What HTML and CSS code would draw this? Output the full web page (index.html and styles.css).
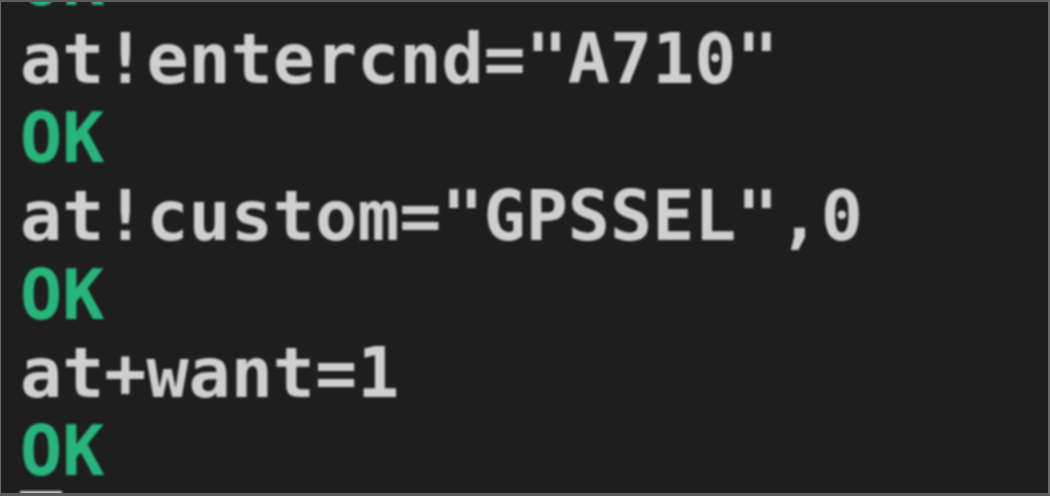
FILE: index.html
```html
<!DOCTYPE html>
<html lang="en">
<head>
<meta charset="utf-8">
<title>Terminal</title>
<link rel="stylesheet" href="styles.css">
</head>
<body>
<div class="frame">
  <div class="term">
    <div class="line ok">OK</div>
    <div class="line">at!entercnd="A710"</div>
    <div class="line ok">OK</div>
    <div class="line">at!custom="GPSSEL",0</div>
    <div class="line ok">OK</div>
    <div class="line">at+want=1</div>
    <div class="line ok">OK</div>
    <div class="line"><span class="cursor">&nbsp;</span></div>
  </div>
</div>
</body>
</html>
```

FILE: styles.css
```css
html, body {
  margin: 0;
  padding: 0;
  background: #1e1e1e;
}
.frame {
  box-sizing: border-box;
  width: 1050px;
  height: 496px;
  overflow: hidden;
  background: #1e1e1e;
  border-top: 2px solid #5c5c5c;
  border-right: 2px solid #6a6a6a;
  border-bottom: 3px solid #5a5a5a;
  border-left: 1px solid #6a6a6a;
}
.term {
  margin-top: -60px;
  padding-left: 19px;
  font-family: "DejaVu Sans Mono", monospace;
  font-size: 70px;
  font-weight: bold;
  color: #cfcfcf;
  filter: blur(0.8px);
}
.line {
  height: 78.4px;
  line-height: 78.4px;
  white-space: pre;
}
.ok {
  color: #27b57c;
}
.cursor {
  display: inline-block;
  width: 42px;
  height: 78px;
  background: #cfcfcf;
  vertical-align: top;
}
```
